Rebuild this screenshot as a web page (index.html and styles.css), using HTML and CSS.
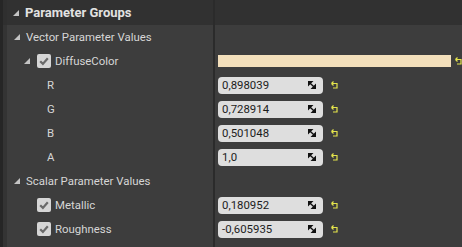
FILE: index.html
```html
<!DOCTYPE html>
<html lang="en">
<head>
    <meta charset="UTF-8">
    <title>Parameter Groups</title>
    <link rel="stylesheet" href="styles.css">
</head>
<body>
    <div class="panel">
        <div class="row group">
            <div class="name"><span class="arrow"></span>Parameter Groups</div>
            <div class="value"></div>
        </div>

        <div class="row">
            <div class="name cat"><span class="arrow"></span>Vector Parameter Values</div>
            <div class="value"></div>
        </div>
        <div class="row">
            <div class="name param"><span class="arrow"></span>
                <span class="check"><svg width="14" height="14" viewBox="0 0 14 14"><path d="M3.2 7.2 L5.9 9.9 L10.8 4.2" fill="none" stroke="#6a6a6a" stroke-width="2.2"/></svg></span>DiffuseColor
            </div>
            <div class="value">
                <div class="swatch"></div>
                <svg class="reset near" width="7" height="8" viewBox="0 0 7 8"><path d="M1 2.5 H6 V7 H2" fill="none" stroke="#e4e44c" stroke-width="1.2"/><path d="M0.5 2.5 L2.5 0.5 M0.5 2.5 L2.5 4.5" stroke="#e4e44c" stroke-width="1.2"/></svg>
            </div>
        </div>
        <div class="row">
            <div class="name channel">R</div>
            <div class="value">
                <div class="field"><span>0,898039</span><svg class="spin" width="8" height="8" viewBox="0 0 8 8"><path d="M0 0 H4.5 L0 4.5 Z M8 8 H3.5 L8 3.5 Z M1 1 L7 7" stroke="#111" stroke-width="1.4" fill="#111"/></svg></div>
                <svg class="reset" width="7" height="8" viewBox="0 0 7 8"><path d="M1 2.5 H6 V7 H2" fill="none" stroke="#e4e44c" stroke-width="1.2"/><path d="M0.5 2.5 L2.5 0.5 M0.5 2.5 L2.5 4.5" stroke="#e4e44c" stroke-width="1.2"/></svg>
            </div>
        </div>
        <div class="row">
            <div class="name channel">G</div>
            <div class="value">
                <div class="field"><span>0,728914</span><svg class="spin" width="8" height="8" viewBox="0 0 8 8"><path d="M0 0 H4.5 L0 4.5 Z M8 8 H3.5 L8 3.5 Z M1 1 L7 7" stroke="#111" stroke-width="1.4" fill="#111"/></svg></div>
                <svg class="reset" width="7" height="8" viewBox="0 0 7 8"><path d="M1 2.5 H6 V7 H2" fill="none" stroke="#e4e44c" stroke-width="1.2"/><path d="M0.5 2.5 L2.5 0.5 M0.5 2.5 L2.5 4.5" stroke="#e4e44c" stroke-width="1.2"/></svg>
            </div>
        </div>
        <div class="row">
            <div class="name channel">B</div>
            <div class="value">
                <div class="field"><span>0,501048</span><svg class="spin" width="8" height="8" viewBox="0 0 8 8"><path d="M0 0 H4.5 L0 4.5 Z M8 8 H3.5 L8 3.5 Z M1 1 L7 7" stroke="#111" stroke-width="1.4" fill="#111"/></svg></div>
                <svg class="reset" width="7" height="8" viewBox="0 0 7 8"><path d="M1 2.5 H6 V7 H2" fill="none" stroke="#e4e44c" stroke-width="1.2"/><path d="M0.5 2.5 L2.5 0.5 M0.5 2.5 L2.5 4.5" stroke="#e4e44c" stroke-width="1.2"/></svg>
            </div>
        </div>
        <div class="row">
            <div class="name channel">A</div>
            <div class="value">
                <div class="field"><span>1,0</span><svg class="spin" width="8" height="8" viewBox="0 0 8 8"><path d="M0 0 H4.5 L0 4.5 Z M8 8 H3.5 L8 3.5 Z M1 1 L7 7" stroke="#111" stroke-width="1.4" fill="#111"/></svg></div>
                <svg class="reset" width="7" height="8" viewBox="0 0 7 8"><path d="M1 2.5 H6 V7 H2" fill="none" stroke="#e4e44c" stroke-width="1.2"/><path d="M0.5 2.5 L2.5 0.5 M0.5 2.5 L2.5 4.5" stroke="#e4e44c" stroke-width="1.2"/></svg>
            </div>
        </div>

        <div class="row">
            <div class="name cat"><span class="arrow"></span>Scalar Parameter Values</div>
            <div class="value"></div>
        </div>
        <div class="row">
            <div class="name param flat">
                <span class="check"><svg width="14" height="14" viewBox="0 0 14 14"><path d="M3.2 7.2 L5.9 9.9 L10.8 4.2" fill="none" stroke="#6a6a6a" stroke-width="2.2"/></svg></span>Metallic
            </div>
            <div class="value">
                <div class="field"><span>0,180952</span><svg class="spin" width="8" height="8" viewBox="0 0 8 8"><path d="M0 0 H4.5 L0 4.5 Z M8 8 H3.5 L8 3.5 Z M1 1 L7 7" stroke="#111" stroke-width="1.4" fill="#111"/></svg></div>
                <svg class="reset" width="7" height="8" viewBox="0 0 7 8"><path d="M1 2.5 H6 V7 H2" fill="none" stroke="#e4e44c" stroke-width="1.2"/><path d="M0.5 2.5 L2.5 0.5 M0.5 2.5 L2.5 4.5" stroke="#e4e44c" stroke-width="1.2"/></svg>
            </div>
        </div>
        <div class="row">
            <div class="name param flat">
                <span class="check"><svg width="14" height="14" viewBox="0 0 14 14"><path d="M3.2 7.2 L5.9 9.9 L10.8 4.2" fill="none" stroke="#6a6a6a" stroke-width="2.2"/></svg></span>Roughness
            </div>
            <div class="value">
                <div class="field"><span>-0,605935</span><svg class="spin" width="8" height="8" viewBox="0 0 8 8"><path d="M0 0 H4.5 L0 4.5 Z M8 8 H3.5 L8 3.5 Z M1 1 L7 7" stroke="#111" stroke-width="1.4" fill="#111"/></svg></div>
                <svg class="reset" width="7" height="8" viewBox="0 0 7 8"><path d="M1 2.5 H6 V7 H2" fill="none" stroke="#e4e44c" stroke-width="1.2"/><path d="M0.5 2.5 L2.5 0.5 M0.5 2.5 L2.5 4.5" stroke="#e4e44c" stroke-width="1.2"/></svg>
            </div>
        </div>

        <div class="row fill">
            <div class="name"></div>
            <div class="value"></div>
        </div>
    </div>
</body>
</html>
```

FILE: styles.css
```css
* {
    margin: 0;
    padding: 0;
    box-sizing: border-box;
}
body {
    font-family: Roboto, 'Liberation Sans', sans-serif;
    font-size: 11.4px;
    background: #3d3d3d;
    color: #d6d6d6;
    overflow: hidden;
}
.panel {
    height: 100vh;
    display: flex;
    flex-direction: column;
    border-left: 3px solid #262626;
}
.row {
    display: grid;
    grid-template-columns: 210px 1fr;
    height: 24px;
    flex-shrink: 0;
}
.row.fill {
    flex: 1;
}
.name {
    display: flex;
    align-items: center;
    border-left: 4px solid #343434;
    white-space: nowrap;
}
.value {
    display: flex;
    align-items: center;
    padding-left: 3px;
    border-left: 2px solid #2b2b2b;
}

/* group header */
.row.group {
    height: 25px;
    background: #313131;
}
.group .name {
    padding-left: 6px;
    font-size: 13px;
    font-weight: bold;
    color: #e2e2e2;
    border-left-color: #2f2f2f;
}
.group .arrow {
    margin-right: 6px;
}

.arrow {
    width: 0;
    height: 0;
    border-left: 6px solid transparent;
    border-bottom: 6px solid #c4c4c4;
}
.cat {
    padding-left: 7px;
}
.cat .arrow {
    margin-right: 6px;
}
.param {
    padding-left: 17px;
}
.param .arrow {
    margin-right: 7px;
}
.param.flat {
    padding-left: 30px;
}
.channel {
    padding-left: 40px;
}

.check {
    width: 14px;
    height: 14px;
    margin-right: 4px;
    background: #d6d6d6;
    border-radius: 2px;
    display: flex;
}

.field {
    width: 105px;
    height: 17px;
    background: #dedede;
    border-radius: 4px;
    color: #1c1c1c;
    display: flex;
    align-items: center;
    justify-content: space-between;
    padding: 0 7px 0 4px;
}
.reset {
    margin-left: 8px;
    flex-shrink: 0;
}
.reset.near {
    margin-left: 4px;
}
.swatch {
    width: 233px;
    height: 12px;
    background: #f3dfbb;
    flex-shrink: 0;
}
```
